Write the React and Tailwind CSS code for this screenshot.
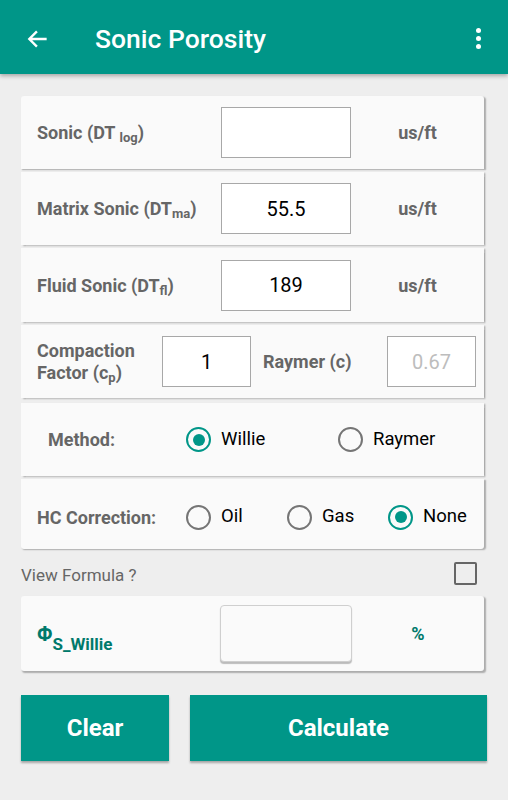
import { useState } from "react";

const Radio = ({ checked, label, onClick }) => (
  <button type="button" onClick={onClick} className="flex items-center gap-[10px]">
    <span
      className={
        checked
          ? "flex h-[25px] w-[25px] items-center justify-center rounded-full border-[2.5px] border-[#009688]"
          : "flex h-[25px] w-[25px] items-center justify-center rounded-full border-[2.5px] border-[#757575]"
      }
    >
      {checked && <span className="h-[12px] w-[12px] rounded-full bg-[#009688]" />}
    </span>
    <span className="text-[18.5px] font-normal text-black">{label}</span>
  </button>
);

const Box = ({ value, className, muted }) => (
  <div
    className={
      "flex items-center justify-center border border-[#a8a8a8] bg-white text-[20px] font-normal " +
      (muted ? "text-[#bdbdbd] " : "text-black ") +
      className
    }
  >
    {value}
  </div>
);

const Row = ({ children, className }) => (
  <div
    className={
      "flex items-center bg-[#fafafa] shadow-[1.5px_1px_1.5px_rgba(0,0,0,0.28)] " + className
    }
  >
    {children}
  </div>
);

const App = () => {
  const [method, setMethod] = useState("willie");
  const [hc, setHc] = useState("none");

  return (
    <div
      className="min-h-[800px] w-[508px] bg-[#eeeeee]"
      style={{ fontFamily: "Roboto, 'Liberation Sans', sans-serif" }}
    >
      {/* Toolbar */}
      <div className="flex h-[74px] items-center bg-[#009688] pt-[3px] shadow-[0_2px_4px_rgba(0,0,0,0.3)]">
        <svg className="ml-[25px] h-[26px] w-[26px]" viewBox="0 0 24 24" fill="none">
          <path d="M20 12H4M11 5l-7 7 7 7" stroke="white" strokeWidth="2.2" />
        </svg>
        <h1 className="ml-[44px] text-[26.5px] font-medium text-white">Sonic Porosity</h1>
        <div className="ml-auto mr-[27px] flex flex-col gap-[3px]">
          <span className="h-[5px] w-[5px] rounded-full bg-white" />
          <span className="h-[5px] w-[5px] rounded-full bg-white" />
          <span className="h-[5px] w-[5px] rounded-full bg-white" />
        </div>
      </div>

      <div className="px-[21px] pt-[22px]">
        <div className="flex w-[463px] flex-col gap-[3px] font-bold text-[#666666]">
          <Row className="h-[73px] rounded-t-[3px] pl-4">
            <div className="w-[184px] text-[18px]">
              Sonic (DT <sub className="text-[13px]">log</sub>)
            </div>
            <Box value="" className="h-[51px] w-[130px]" />
            <div className="flex-1 text-center text-[18px]">us/ft</div>
          </Row>
          <Row className="h-[73px] pl-4">
            <div className="w-[184px] text-[18px]">
              Matrix Sonic (DT<sub className="text-[13px]">ma</sub>)
            </div>
            <Box value="55.5" className="h-[51px] w-[130px]" />
            <div className="flex-1 text-center text-[18px]">us/ft</div>
          </Row>
          <Row className="h-[74px] pl-4">
            <div className="w-[184px] text-[18px]">
              Fluid Sonic (DT<sub className="text-[13px]">fl</sub>)
            </div>
            <Box value="189" className="h-[51px] w-[130px]" />
            <div className="flex-1 text-center text-[18px]">us/ft</div>
          </Row>
          <Row className="h-[73px] pl-4">
            <div className="w-[125px] text-[18px] leading-[22px]">
              Compaction
              <br />
              Factor (c<sub className="text-[13px]">p</sub>)
            </div>
            <Box value="1" className="h-[51px] w-[89px]" />
            <div className="w-[136px] pl-3 text-[18px]">Raymer (c)</div>
            <Box value="0.67" muted className="h-[51px] w-[89px]" />
          </Row>
          <Row className="mt-[2px] h-[73px] pl-[27px]">
            <div className="w-[138px] text-[18px]">Method:</div>
            <div className="w-[152px]">
              <Radio checked={method === "willie"} label="Willie" onClick={() => setMethod("willie")} />
            </div>
            <Radio checked={method === "raymer"} label="Raymer" onClick={() => setMethod("raymer")} />
          </Row>
          <Row className="h-[70px] rounded-b-[3px] pl-4 pt-[6px]">
            <div className="w-[149px] text-[18px]">HC Correction:</div>
            <div className="w-[101px]">
              <Radio checked={hc === "oil"} label="Oil" onClick={() => setHc("oil")} />
            </div>
            <div className="w-[101px]">
              <Radio checked={hc === "gas"} label="Gas" onClick={() => setHc("gas")} />
            </div>
            <Radio checked={hc === "none"} label="None" onClick={() => setHc("none")} />
          </Row>
        </div>

        <div className="flex h-[47px] w-[463px] items-center justify-between pt-[6px]">
          <span className="text-[17px] text-[#666666]">View Formula ?</span>
          <span className="mr-[7px] -mt-[4px] h-[23px] w-[23px] rounded-[2px] border-2 border-[#666666]" />
        </div>

        <div className="flex h-[75px] w-[463px] items-center rounded-[3px] bg-[#fafafa] pl-4 shadow-[1.5px_1.5px_1.5px_rgba(0,0,0,0.28)]">
          <div className="w-[183px] font-bold text-[#00796b]">
            <span className="text-[20px]">Φ</span>
            <span className="relative top-[9px] text-[17px]">S_Willie</span>
          </div>
          <div className="h-[57px] w-[132px] rounded-[4px] border border-[#cfcfcf] bg-[#fafafa] shadow-[0_2px_1px_rgba(0,0,0,0.25)]" />
          <div className="flex-1 text-center text-[18px] font-bold text-[#00796b]">%</div>
        </div>

        <div className="mt-[24px] flex gap-[21px]">
          <button
            type="button"
            className="h-[66px] w-[148px] bg-[#009688] text-[24px] font-bold text-white shadow-[0_2px_2px_rgba(0,0,0,0.3)]"
          >
            Clear
          </button>
          <button
            type="button"
            className="h-[66px] w-[297px] bg-[#009688] text-[24px] font-bold text-white shadow-[0_2px_2px_rgba(0,0,0,0.3)]"
          >
            Calculate
          </button>
        </div>
      </div>
    </div>
  );
};

export default App;
